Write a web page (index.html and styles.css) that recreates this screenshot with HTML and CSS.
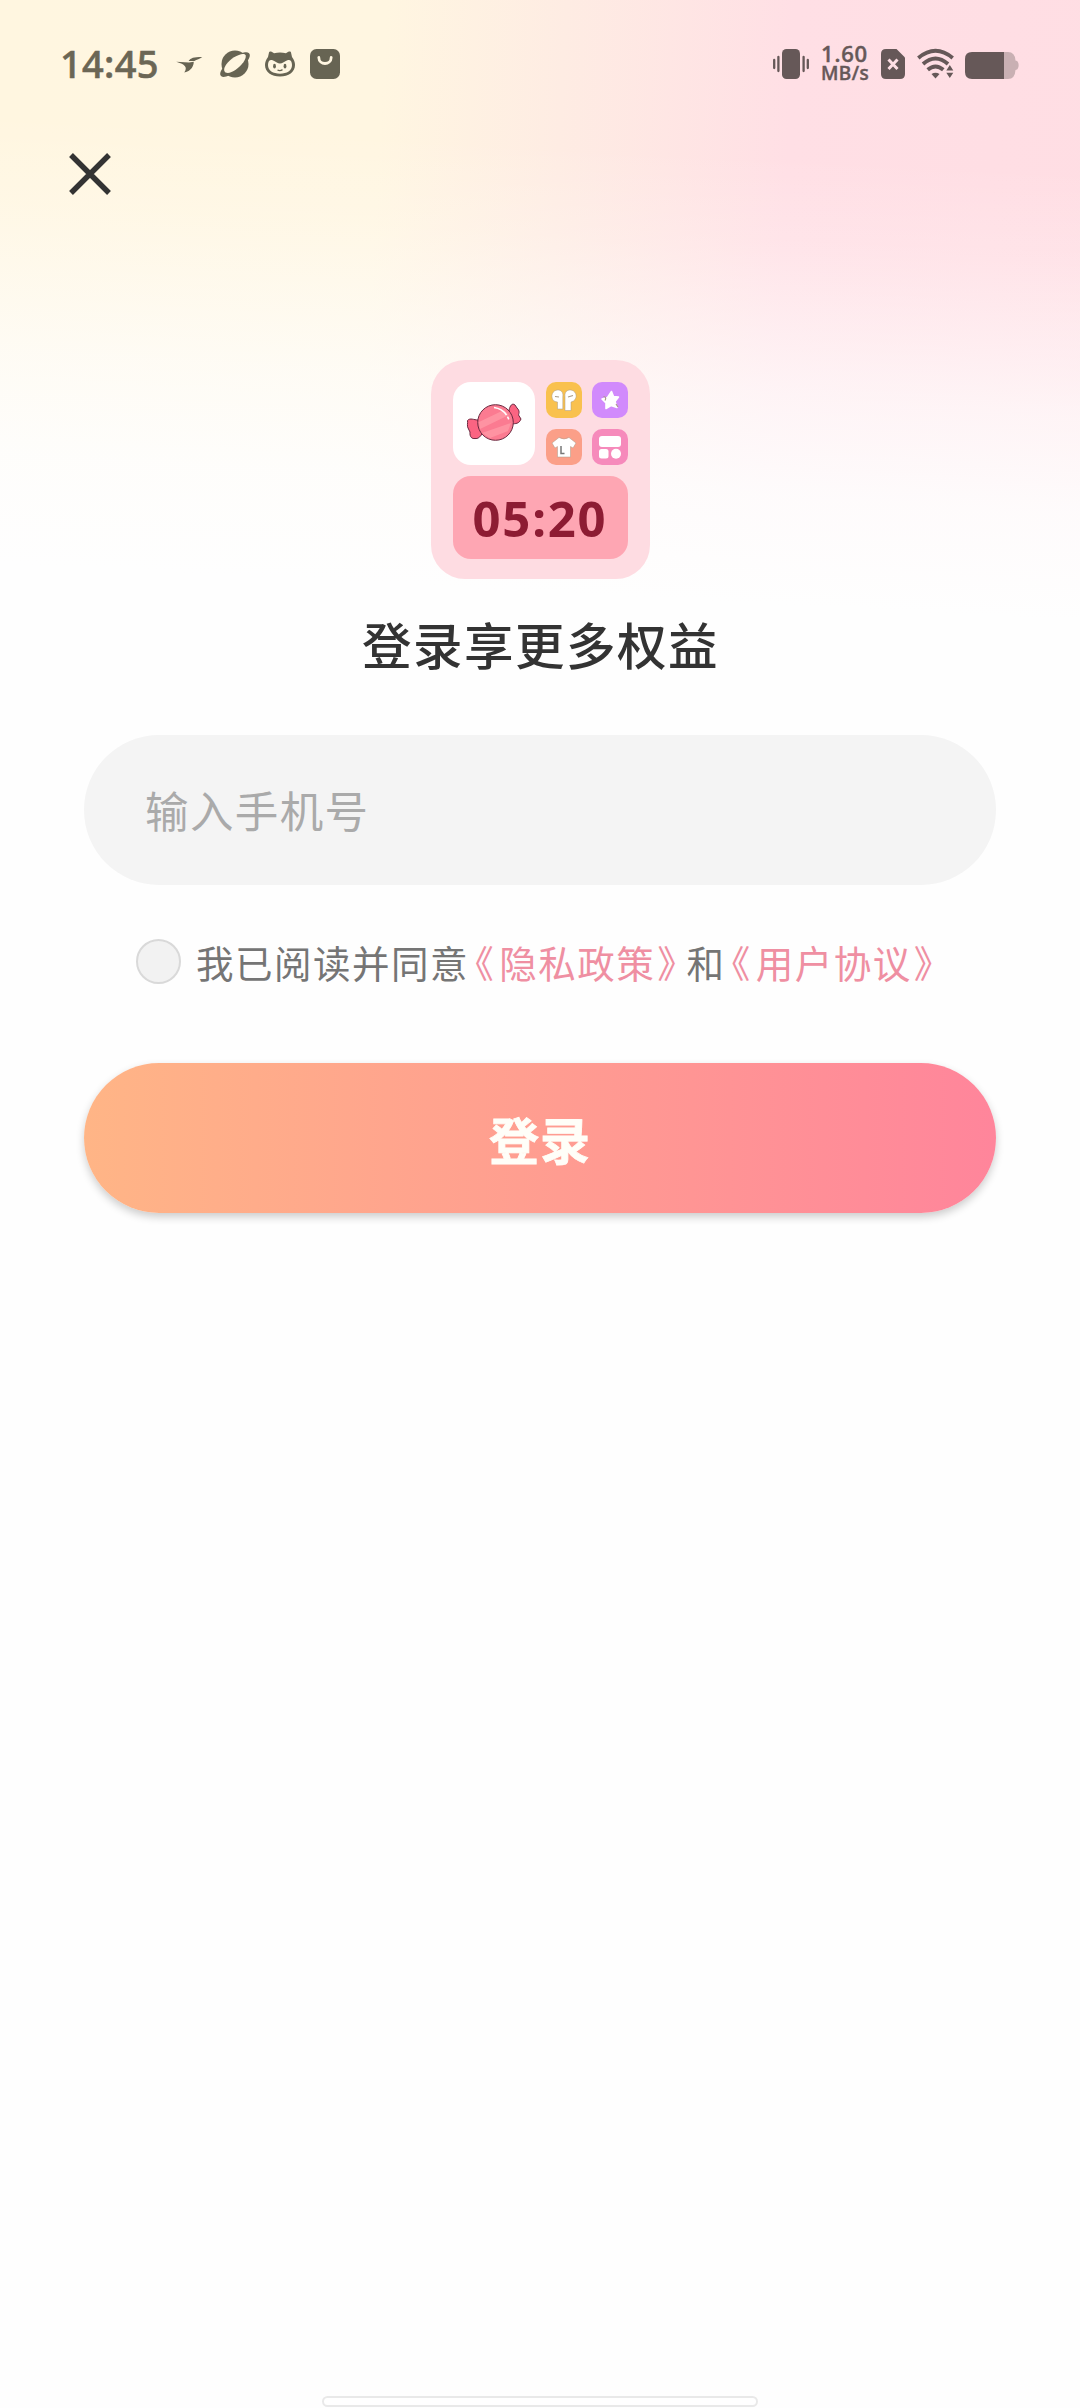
FILE: index.html
```html
<!DOCTYPE html>
<html lang="zh-CN">
<head>
<meta charset="utf-8">
<title>登录</title>
<link rel="stylesheet" href="styles.css">
</head>
<body>
<main class="screen">
  <header class="status">
    <div class="status-left">
      <span class="time">14:45</span>
      <svg class="i-bird" viewBox="0 0 28 18"><path d="M0 6.200 13.500 6.800 18.500 6.200C18.500 10 16.500 16 8.500 17.500 10.500 14 10.500 12.500 9 10.500 7 8 4 8 0 6.200Z"/><path d="M13 5.300C15.500 2 18 1 27.500 1 25 3.500 21.500 3.200 19.200 5.200Z"/></svg>
      <svg class="i-planet" viewBox="0 0 30 28"><circle cx="15" cy="14" r="13.500"/><path d="M21 3.500C26 1.200 30.500 1.800 29.800 6 29.300 8.500 28 10.500 26 12.500L3.500 17C1 20 0 22.500.2 24.500.8 28 5.500 27 9 25.500Z"/><path class="hole" d="M4.200 20.500C3.500 17 8 11 14 7.300 19.500 4 24.500 2.700 25.700 5.500 26.500 9 22 15 16 19.500 10.500 23.400 5.500 24.500 4.200 20.500Z"/></svg>
      <svg class="i-cat" viewBox="0 0 30 26"><path d="M4 1.500C4.200.2 6.500.2 9 2.200Q15 .8 21 2.200C23.500.2 25.800.2 26 1.500L27 6C29 9 30 11 30 14 30 21 23.500 25.500 15 25.500S0 21 0 14C0 11 1 9 3 6Z"/><path class="hole" d="M3 14C3 10.500 4.500 8.500 7 9 10 10.300 13 12.500 15 12.500S20 10.300 23 9C25.500 8.500 27 10.500 27 14 27 19.500 22 22.700 15 22.700S3 19.500 3 14Z"/><ellipse cx="9.500" cy="15.200" rx="1.400" ry="2.400"/><ellipse cx="20" cy="15.200" rx="1.400" ry="2.400"/><path class="line" d="M12.500 19Q15 20.300 17.500 18.600"/></svg>
      <svg class="i-bag" viewBox="0 0 30 30"><rect width="30" height="30" rx="6.500"/><path class="smile" d="M8.800 8.500C9 16.500 21 16.500 21.200 8.500"/></svg>
    </div>
    <div class="status-right">
      <svg class="i-vib" viewBox="0 0 36 30"><rect x="9" width="18" height="30" rx="4.500"/><path class="bars" d="M1.200 11v8M5.400 8v14M30.600 8v14M34.800 11v8"/></svg>
      <div class="speed"><span>1.60</span><span class="unit">MB/s</span></div>
      <svg class="i-sim" viewBox="0 0 24 30"><path d="M5 0H15.500L24 8.500V25Q24 30 19 30H5Q0 30 0 25V5Q0 0 5 0Z"/><path class="cross" d="M7.500 10.500 16.500 20M16.500 10.500 7.500 20"/></svg>
      <svg class="i-wifi" viewBox="0 0 38 30"><path class="arc" d="M1.300 9Q18.500-5.400 35.700 9M6 15Q18.500 4 31 15M10.700 20.800Q18.500 14 26.300 20.800"/><path d="M14.500 25Q18.500 22.500 22.500 25L18.500 29.500Z"/><path class="gap" d="M32.800 13.500 28 21V31H38V19Z"/><path d="M32.800 16 36.300 21.500H29.300ZM29.300 23.700H36.300L32.800 29Z"/></svg>
      <svg class="i-bat" viewBox="0 0 54 27"><path class="empty" d="M38 0H43Q50 0 50.500 8.500C54.700 8.500 54.700 18 50.500 18Q50 27 43 27H38Z"/><path d="M7 0H39V27H7Q0 27 0 20V7Q0 0 7 0Z"/></svg>
    </div>
  </header>

  <button class="close" aria-label="关闭"><svg viewBox="0 0 42 42"><path d="M2 2 40 40M40 2 2 40"/></svg></button>

  <section class="logo">
    <div class="candy"><svg viewBox="0 0 56 40"><g class="wrap"><path d="M43 7C44 3 46-.5 49 2L51 5C54 8 53 10 52.500 12L55 16C53 21 50 20.500 45 21Z"/><path d="M12 17C8 17 4 14.500 1.500 17.500 2 20 .5 23 2.500 26L4 29C3.500 34 6 36 9 35.500 12 36 14 34 16 31Z"/></g><circle class="ball" cx="29.500" cy="19.500" r="17.800"/><path class="stripe" d="M13 19 38 7 43 12 14 26ZM16 30 45 20 42 28 24 35Z"/><path class="shine" d="M28 4.500Q39 6 43 17"/></svg></div>
    <div class="tiles">
      <div class="tile gold"><svg viewBox="0 0 36 36"><path class="edge" d="M16.800 27V15C18 8 12 6.800 8.500 9 4.500 12 5.500 18 9 19.500L11.500 20V27ZM19 28.500V15C18 8 24 6.800 27.500 9 31.500 12 30.500 17 27.500 19L25 20V28.500Z"/><path class="mark" d="M9 14.500 13 15M22 15 27 13.500"/></svg></div>
      <div class="tile violet"><svg viewBox="0 0 36 36"><path class="star" d="M19.500 9.500 21.500 14.500 26.500 15 23 19.500 25 25.500 19 23.500 14 26.500 14 21 10 17 15.500 15.500Z"/><path class="mark" d="M11.500 14.500Q15 15 13 18.500M24 22 26 25"/></svg></div>
      <div class="tile coral"><svg viewBox="0 0 36 36"><path class="edge" d="M13 8.500Q18 11.500 23 8.500L30 14 27 19 24.500 17.500V28H11.500V17.500L9 19 6 14Z"/><path class="mark dark" d="M15 17V24.500H18.500"/></svg></div>
      <div class="tile rose"><svg viewBox="0 0 36 36"><rect x="7" y="7" width="22" height="11" rx="3"/><rect x="7" y="20" width="9.500" height="9.500" rx="2.500"/><circle cx="24" cy="24.700" r="5"/></svg></div>
    </div>
    <div class="clock">05:20</div>
  </section>

  <h1 class="title">登录享更多权益</h1>
  <div class="phone">输入手机号</div>
  <div class="agree"><span class="radio"></span><p>我已阅读并同意<a class="open">《</a><a>隐私政策</a><a class="shut">》</a>和<a class="open">《</a><a>用户协议</a><a class="shut">》</a></p></div>
  <button class="login">登录</button>
  <div class="home"></div>
</main>
</body>
</html>
```
FILE: styles.css
```css
* { box-sizing: border-box; }
body { margin: 0; }
svg { display: block; overflow: visible; flex: none; }
button { border: 0; padding: 0; background: none; font: inherit; }

.screen {
  height: 2408px;
  display: flex;
  flex-direction: column;
  align-items: center;
  padding-bottom: 1px;
  font-family: "Noto Sans CJK SC", sans-serif;
  background:
    linear-gradient(183deg, rgba(254,254,254,0) 170px, rgba(254,254,254,.18) 260px, rgba(254,254,254,.68) 410px, rgba(254,254,254,.9) 510px, #fefefe 620px),
    linear-gradient(93deg, #fff6e0 0, #fff6e1 32%, #feece3 47%, #ffdfe5 66%, #ffdde3 100%);
}

.status {
  align-self: stretch;
  height: 128px;
  padding: 0 61px 0 60px;
  display: flex;
  justify-content: space-between;
  align-items: center;
}
.status-left, .status-right { display: flex; align-items: center; }
.status-left { fill: #676453; }
.status-right { fill: #665858; color: #665858; }
.time { width: 117px; margin-top: -3px; font: 500 38px/44px "Noto Sans", sans-serif; letter-spacing: .3px; color: #6b6655; -webkit-text-stroke: .6px #6b6655; }
.i-bird { width: 27px; height: 17px; margin: 0 2px 0 -1px; }
.i-planet { width: 30px; height: 28px; margin-left: 15px; }
.i-cat { width: 30px; height: 26px; margin-left: 15px; }
.hole { fill: #fff6e1; }
.line { fill: none; stroke: #676453; stroke-width: 1.3; }
.i-bag { width: 30px; height: 30px; margin-left: 15px; }
.smile { fill: none; stroke: #fff6e1; stroke-width: 2.8; stroke-linecap: round; }

.i-vib { width: 36px; height: 30px; }
.bars { fill: none; stroke: #665858; stroke-width: 2.3; stroke-linecap: round; }
.speed { width: 60px; height: 44px; margin: -2px 0 0 12px; display: flex; flex-direction: column; font: 500 22px/24px "Noto Sans", sans-serif; letter-spacing: .8px; -webkit-text-stroke: .5px #665858; }
.unit { font-size: 19px; line-height: 17px; letter-spacing: .4px; }
.i-sim { width: 24px; height: 30px; }
.cross { fill: none; stroke: #ffdfe5; stroke-width: 3; }
.i-wifi { width: 38px; height: 30px; margin-left: 12px; }
.arc { fill: none; stroke: #665858; stroke-width: 3.8; }
.gap { fill: #ffdfe5; }
.i-bat { width: 54px; height: 27px; margin: 3px 0 0 10px; }
.empty { fill: #c9b0b3; }

.close { align-self: flex-start; width: 42px; height: 42px; margin: 25px 0 0 69px; }
.close svg { width: 42px; height: 42px; fill: none; stroke: #333; stroke-width: 5.4; }

.logo {
  width: 219px;
  height: 219px;
  margin-top: 165px;
  padding: 22px;
  display: grid;
  grid-template: 83px 83px / 82px 82px;
  gap: 11px;
  border-radius: 34px;
  background: #fedce2;
}
.candy { display: flex; align-items: center; justify-content: center; border-radius: 18px; background: #fff; }
.candy svg { width: 56px; height: 40px; margin-top: -2px; }
.wrap { fill: #fb6482; stroke: #6b2940; stroke-width: 1; }
.ball { fill: #fb7b91; stroke: #6b2940; stroke-width: 1; }
.stripe { fill: #ff9aa6; opacity: .8; }
.shine { fill: none; stroke: #fff; stroke-width: 1.6; stroke-dasharray: 15 2 3 2; }
.tiles { display: grid; grid-template: 36px 36px / 36px 36px; gap: 11px 10px; }
.tile { border-radius: 10px; }
.tile svg { width: 36px; height: 36px; fill: #fff; }
.star { stroke: #fff; stroke-width: 1.6; stroke-linejoin: round; }
.edge { stroke: #a99a88; stroke-width: .5; }
.gold { background: #f9c14e; }
.violet { background: #d18afc; }
.coral { background: #fb9f88; }
.rose { background: #f68abb; }
.mark { fill: none; stroke: #a99a88; stroke-width: 1.2; }
.dark { stroke: #777; stroke-width: 1.5; }
.clock {
  grid-column: 1 / 3;
  border-radius: 18px;
  background: #fea6b3;
  color: #8d1c33;
  font: 700 49px/84px "Noto Sans", sans-serif;
  letter-spacing: 1.8px;
  text-align: center;
}

.title { margin: 30px 0 0 1px; font-size: 49.5px; line-height: 70px; font-weight: 500; letter-spacing: 1.5px; color: #333; }
.phone {
  width: 912px;
  height: 150px;
  margin-top: 56px;
  padding-left: 61px;
  border-radius: 75px;
  background: #f4f4f4;
  color: #aaa;
  font-size: 43.5px;
  line-height: 150px;
  letter-spacing: 1.4px;
}
.agree { align-self: stretch; height: 60px; margin-top: 47px; padding-left: 136px; display: flex; align-items: center; gap: 15px; }
.radio { width: 45px; height: 45px; margin-top: -2px; border: 2px solid #d9d9d9; border-radius: 50%; background: #f2f2f2; }
.agree p { margin: -1px 0 0; font-size: 37.500px; line-height: 60px; letter-spacing: 1.5px; color: #757575; white-space: nowrap; }
.agree a { color: #ef8fa2; }
.open, .shut { font-feature-settings: "halt"; }
.open { margin: 0 4px 0 6px; }
.shut { margin: 0 9px 0 2px; }
.login {
  width: 912px;
  height: 150px;
  margin-top: 71px;
  border-radius: 75px;
  background: linear-gradient(90deg, #ffb586, #ff859b);
  box-shadow: 0 4px 8px rgba(0,0,0,.2);
  color: #fffef8;
  font-size: 50px;
  font-weight: 700;
  line-height: 148px;
  letter-spacing: 1px;
  -webkit-text-stroke: .8px #fffef8;
}
.home { width: 436px; height: 11px; margin-top: auto; border: 2px solid #e9e9e9; border-radius: 6px; background: #fff; }
```
